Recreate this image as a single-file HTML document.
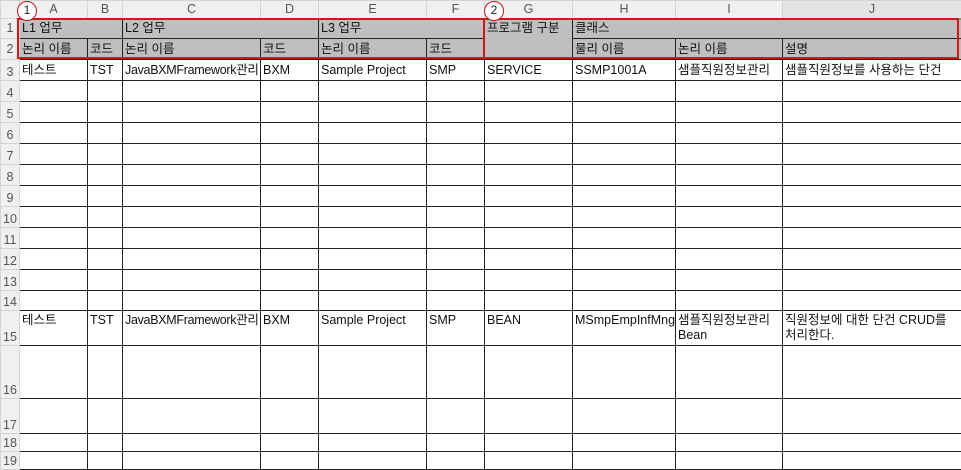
<!DOCTYPE html>
<html><head><meta charset="utf-8"><style>
body{margin:0;width:961px;height:469px;overflow:hidden;background:#fff;font-family:"Liberation Sans","Noto Sans CJK KR",sans-serif;}
table{border-collapse:collapse;table-layout:fixed;position:absolute;left:0;top:0;width:961px;}
td{border:1px solid #222;padding:0 0 0 2px;font-size:12.5px;color:#111;white-space:nowrap;overflow:hidden;vertical-align:middle;line-height:15px;}
td.h{background:#f0f0f0;color:#555;text-align:center;border:1px solid #d4d4d4;padding:0;font-size:12.5px;}
td.r{background:#f0f0f0;color:#555;text-align:center;border:1px solid #d4d4d4;padding:0;vertical-align:bottom;font-size:12.5px;}
td.g{background:#bfbfbf;}
tr.t td:not(.r){vertical-align:top;padding-top:2px;}
.red{position:absolute;border:2px solid #d01818;box-sizing:border-box;}
.c{position:absolute;width:20px;height:20px;border:1.5px solid #c01515;border-radius:50%;background:#fff;box-sizing:border-box;font-size:12px;text-align:center;line-height:17px;color:#222;}
</style></head><body>
<table>
<colgroup><col style="width:19px"><col style="width:68px"><col style="width:35px"><col style="width:138px"><col style="width:58px"><col style="width:108px"><col style="width:58px"><col style="width:88px"><col style="width:103px"><col style="width:107px"><col style="width:179px"></colgroup>
<tr style="height:18px"><td class="h"></td><td class="h">A</td><td class="h">B</td><td class="h">C</td><td class="h">D</td><td class="h">E</td><td class="h">F</td><td class="h">G</td><td class="h">H</td><td class="h">I</td><td class="h" style="background:#e4e4e4;border-bottom:2px solid #6aa56a">J</td></tr>
<tr style="height:20px"><td class="r" style="vertical-align:middle">1</td><td class="g" colspan="2">L1 업무</td><td class="g" colspan="2">L2 업무</td><td class="g" colspan="2">L3 업무</td><td class="g" rowspan="2" style="vertical-align:top;padding-top:2px">프로그램 구분</td><td class="g" colspan="3">클래스</td></tr>
<tr style="height:21px"><td class="r" style="vertical-align:middle">2</td><td class="g">논리 이름</td><td class="g">코드</td><td class="g">논리 이름</td><td class="g">코드</td><td class="g">논리 이름</td><td class="g">코드</td><td class="g">물리 이름</td><td class="g">논리 이름</td><td class="g">설명</td></tr>
<tr style="height:21px"><td class="r">3</td><td>테스트</td><td>TST</td><td style="letter-spacing:-0.3px">JavaBXMFramework관리</td><td>BXM</td><td>Sample Project</td><td>SMP</td><td>SERVICE</td><td>SSMP1001A</td><td>샘플직원정보관리</td><td>샘플직원정보를 사용하는 단건</td></tr>
<tr style="height:21px"><td class="r">4</td><td></td><td></td><td></td><td></td><td></td><td></td><td></td><td></td><td></td><td></td></tr>
<tr style="height:21px"><td class="r">5</td><td></td><td></td><td></td><td></td><td></td><td></td><td></td><td></td><td></td><td></td></tr>
<tr style="height:21px"><td class="r">6</td><td></td><td></td><td></td><td></td><td></td><td></td><td></td><td></td><td></td><td></td></tr>
<tr style="height:21px"><td class="r">7</td><td></td><td></td><td></td><td></td><td></td><td></td><td></td><td></td><td></td><td></td></tr>
<tr style="height:21px"><td class="r">8</td><td></td><td></td><td></td><td></td><td></td><td></td><td></td><td></td><td></td><td></td></tr>
<tr style="height:21px"><td class="r">9</td><td></td><td></td><td></td><td></td><td></td><td></td><td></td><td></td><td></td><td></td></tr>
<tr style="height:21px"><td class="r">10</td><td></td><td></td><td></td><td></td><td></td><td></td><td></td><td></td><td></td><td></td></tr>
<tr style="height:21px"><td class="r">11</td><td></td><td></td><td></td><td></td><td></td><td></td><td></td><td></td><td></td><td></td></tr>
<tr style="height:21px"><td class="r">12</td><td></td><td></td><td></td><td></td><td></td><td></td><td></td><td></td><td></td><td></td></tr>
<tr style="height:21px"><td class="r">13</td><td></td><td></td><td></td><td></td><td></td><td></td><td></td><td></td><td></td><td></td></tr>
<tr style="height:20px"><td class="r">14</td><td></td><td></td><td></td><td></td><td></td><td></td><td></td><td></td><td></td><td></td></tr>
<tr class="t" style="height:35px"><td class="r">15</td><td>테스트</td><td>TST</td><td style="letter-spacing:-0.3px">JavaBXMFramework관리</td><td>BXM</td><td>Sample Project</td><td>SMP</td><td>BEAN</td><td>MSmpEmpInfMng</td><td style="white-space:normal">샘플직원정보관리<br>Bean</td><td style="white-space:normal">직원정보에 대한 단건 CRUD를<br>처리한다.</td></tr>
<tr style="height:53px"><td class="r">16</td><td></td><td></td><td></td><td></td><td></td><td></td><td></td><td></td><td></td><td></td></tr>
<tr style="height:35px"><td class="r">17</td><td></td><td></td><td></td><td></td><td></td><td></td><td></td><td></td><td></td><td></td></tr>
<tr style="height:18px"><td class="r">18</td><td></td><td></td><td></td><td></td><td></td><td></td><td></td><td></td><td></td><td></td></tr>
<tr style="height:18px"><td class="r">19</td><td></td><td></td><td></td><td></td><td></td><td></td><td></td><td></td><td></td><td></td></tr>
</table>
<div class="red" style="left:17px;top:18px;width:468px;height:41px"></div>
<div class="red" style="left:483px;top:18px;width:476px;height:41px"></div>
<div class="c" style="left:17px;top:1px">1</div>
<div class="c" style="left:484px;top:1px">2</div>
</body></html>
